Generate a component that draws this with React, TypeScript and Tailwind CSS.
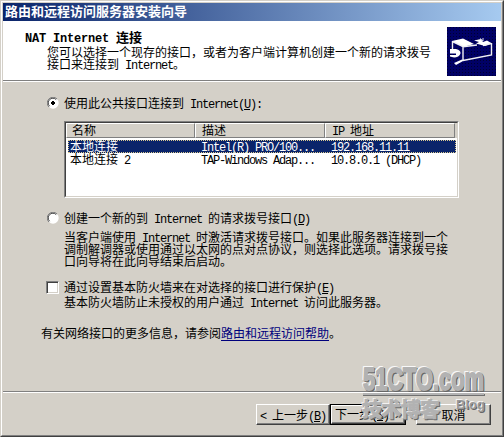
import React from "react";

/** Splits a label so Latin runs take half-width cells beside full-width characters. */
function T({ children }: { children: string }) {
  return (
    <>
      {children.split(/([\x20-\x7e]+)/).map((s, i) =>
        i % 2 ? (
          <span key={i} className="font-['Liberation_Mono',monospace] text-[12px] leading-[0] tracking-[-1.2px]">{s}</span>
        ) : (
          s
        ),
      )}
    </>
  );
}

function Key({ k }: { k: string }) {
  return (
    <span className="font-['Liberation_Mono',monospace] text-[12px] leading-[0] tracking-[-1.2px]">
      (<span className="underline underline-offset-1">{k}</span>)
    </span>
  );
}

function Radio({ checked }: { checked?: boolean }) {
  return (
    <svg width="12" height="12" viewBox="0 0 12 12" className="shrink-0">
      <circle cx="6" cy="6" r="5.7" fill="#fff" />
      <path d="M1.9 10.1A5.5 5.5 0 0 1 10.1 1.9" fill="none" stroke="#808080" />
      <path d="M2.6 9.2A4.6 4.6 0 0 1 9.2 2.6" fill="none" stroke="#404040" />
      {checked && <path d="M5 4h2v1h1v2h-1v1h-2v-1h-1v-2h1z" fill="#000" />}
    </svg>
  );
}

const raised =
  "border border-t-white border-l-white border-r-[#404040] border-b-[#404040] shadow-[inset_-1px_-1px_0_#808080]";

function ConnectionIcon() {
  return (
    <svg width="49" height="49" viewBox="0 0 49 49" className="shrink-0">
      <defs>
        <pattern id="dither" width="3" height="3" patternUnits="userSpaceOnUse">
          <rect width="3" height="3" fill="#000066" />
          <rect width="1" height="1" fill="#000030" />
        </pattern>
      </defs>
      <rect width="49" height="49" fill="url(#dither)" />
      <path d="M5 14L16 11.5L27 17L16 20Z" fill="#fff" />
      <path d="M27 13.5L34 12L36 15L40 13.5L45 16.5L38 19L29 16.5L32 15Z" fill="#fff" />
      <path d="M33 11.5L36 14M36 11L36 14" stroke="#d8d8e8" />
      <path d="M5.5 14V22M5.5 14.5L16 19.5V33M44.5 16V28L16 33.5M16 19.8L30 18M36 18.5L44 16.5" fill="none" stroke="#f0f0f4" strokeWidth="1.4" />
      <path d="M3 22H9Q14 23 13.5 26.5Q12 30.5 7 30.5L3 29.5V28H9V26.5H3Z" fill="#fff" />
      <path d="M7 36L15 32.5L17 33.5L9 38Z" fill="#fff" />
    </svg>
  );
}

const rows = [
  { name: "本地连接", desc: "Intel(R) PRO/100...", ip: "192.168.11.11", selected: true },
  { name: "本地连接 2", desc: "TAP-Windows Adap...", ip: "10.8.0.1 (DHCP)", selected: false },
];

const headCell =
  "h-[15px] border border-t-white border-l-white border-r-[#808080] border-b-[#808080] leading-[12px]";

export default function App() {
  return (
    <div className="relative flex h-[437px] w-[504px] flex-col overflow-hidden border border-t-[#d4d0c8] border-r-[#404040] border-b-[#404040] border-l-[#d4d0c8] bg-[#d4d0c8] font-['Noto_Sans_CJK_SC',sans-serif] text-[12px] leading-[12px] whitespace-pre text-black">
      <div className="flex flex-1 flex-col border border-t-white border-r-[#808080] border-b-[#808080] border-l-white px-px pt-px">
        <div className="h-[18px] shrink-0 bg-linear-to-r/srgb from-[#0a246a] to-[#a6caf0] pl-0.5 text-[13px] leading-[16px] font-bold text-white">
          路由和远程访问服务器安装向导
        </div>

        <div className="flex h-[59px] shrink-0 justify-between bg-white pl-[22px]">
          <div className="pt-2.5">
            <div className="font-bold">
              <span className="font-['Liberation_Mono',monospace] text-[12px] leading-[0] tracking-[-0.2px]">NAT Internet </span>
              <span className="text-[13px] leading-[0]">连接</span>
            </div>
            <div className="pt-[3px] pl-[22px]">
              <div>您可以选择一个现存的接口，或者为客户端计算机创建一个新的请求拨号</div>
              <div><T>接口来连接到 Internet。</T></div>
            </div>
          </div>
          <div className="pt-1.5 pr-[5px]"><ConnectionIcon /></div>
        </div>
        <div className="h-0.5 shrink-0 border-t border-b border-t-[#808080] border-b-white" />

        <div className="flex h-[309px] shrink-0 flex-col pl-[38px]">
          <div className="ml-1.5 flex pt-[15px]">
            <Radio checked />
            <div className="ml-[5px]"><T>使用此公共接口连接到 Internet</T><Key k="U" /><T>:</T></div>
          </div>

          <div className="mt-3 ml-[23px] h-[77px] w-[395px] shrink-0 border border-t-[#808080] border-r-white border-b-white border-l-[#808080]">
            <div className="h-full border border-t-[#404040] border-r-[#d4d0c8] border-b-[#d4d0c8] border-l-[#404040] bg-white">
              <div className="flex bg-[#d4d0c8]">
                <div className={`${headCell} w-[129px] pl-[5px]`}>名称</div>
                <div className={`${headCell} w-[130px] pl-1.5`}>描述</div>
                <div className={`${headCell} w-[130px] pl-1.5`}><T>IP 地址</T></div>
              </div>
              <div className="mt-0.5 ml-0.5 w-[388px]">
                {rows.map((r) => (
                  <div
                    key={r.name}
                    className={
                      r.selected
                        ? "flex h-[13px] bg-[#0a246a] leading-[11px] text-white outline outline-dotted -outline-offset-1 outline-[#d8c890]"
                        : "flex h-[13px] leading-[12px]"
                    }
                  >
                    <div className="w-[133px] pl-0.5"><T>{r.name}</T></div>
                    <div className="w-[130px]"><T>{r.desc}</T></div>
                    <div><T>{r.ip}</T></div>
                  </div>
                ))}
              </div>
            </div>
          </div>

          <div className="mt-3.5 ml-1.5 flex">
            <Radio />
            <div className="ml-[5px]"><T>创建一个新的到 Internet 的请求拨号接口</T><Key k="D" /></div>
          </div>
          <div className="mt-[7px] ml-[23px]">
            <div><T>当客户端使用 Internet 时激活请求拨号接口。如果此服务器连接到一个</T></div>
            <div>调制解调器或使用通过以太网的点对点协议，则选择此选项。请求拨号接</div>
            <div>口向导将在此向导结束后启动。</div>
          </div>

          <div className="mt-[14px] ml-[5px] flex">
            <span className="size-[13px] border border-t-[#808080] border-r-white border-b-white border-l-[#808080] bg-white shadow-[inset_1px_1px_0_#404040,inset_-1px_-1px_0_#d4d0c8]" />
            <div className="ml-[5px]"><T>通过设置基本防火墙来在对选择的接口进行保护</T><Key k="E" /></div>
          </div>
          <div className="mt-0.5 ml-[23px]"><T>基本防火墙防止未授权的用户通过 Internet 访问此服务器。</T></div>

          <div className="mt-[19px]">
            有关网络接口的更多信息，请参阅<span className="text-[#00007c] underline underline-offset-2">路由和远程访问帮助</span>。
          </div>
        </div>

        <div className="h-0.5 shrink-0 border-t border-b border-t-[#808080] border-b-white" />
        <div className="mt-[11px] flex h-[21px] shrink-0 pl-[253px]">
          <button className={`${raised} w-[74px] leading-[16px]`}><T>{"< 上一步"}</T><Key k="B" /></button>
          <button className="w-[76px] border border-black leading-[15px]">
            <span className={`${raised} block h-full`}>下一步<Key k="N" /><T>{" >"}</T></span>
          </button>
          <button className={`${raised} ml-2.5 w-[75px] leading-[16px]`}>取消</button>
        </div>
      </div>

      <div className="absolute top-[362px] left-[358px] h-[62px] w-[135px]">
        <svg width="135" height="62" className="overflow-visible">
          <g fontFamily="'Liberation Sans',sans-serif" fontWeight="700" strokeLinejoin="round">
            <g fontSize="31" strokeWidth="1.8">
              <text x="5" y="27.5" textLength="121" lengthAdjust="spacingAndGlyphs" fill="#666" stroke="#666">51CTO.com</text>
              <text x="3" y="25.5" textLength="121" lengthAdjust="spacingAndGlyphs" fill="#f8f8f8" stroke="#f8f8f8">51CTO.com</text>
              <text x="4" y="26.5" textLength="121" lengthAdjust="spacingAndGlyphs" fill="#b2b2b2" stroke="#b2b2b2">51CTO.com</text>
            </g>
            <path d="M4 31H126V33H4Z" fill="#707070" />
            <path d="M4 30H125V32H4Z" fill="#b4b4b4" />
            <g fontSize="13">
              <text x="98" y="47" textLength="29" fill="#666">Blog</text>
              <text x="96" y="45" textLength="29" fill="#f4f4f4">Blog</text>
              <text x="97" y="46" textLength="29" fill="#999">Blog</text>
            </g>
          </g>
          <g fontFamily="'Noto Sans CJK SC',sans-serif" fontWeight="900" fontSize="20" strokeWidth="0.5">
            <text x="4" y="55" textLength="78" fill="#666" stroke="#666">技术博客</text>
            <text x="2" y="53" textLength="78" fill="#f8f8f8">技术博客</text>
            <text x="3" y="54" textLength="78" fill="#b2b2b2" stroke="#b2b2b2">技术博客</text>
          </g>
        </svg>
      </div>
    </div>
  );
}
